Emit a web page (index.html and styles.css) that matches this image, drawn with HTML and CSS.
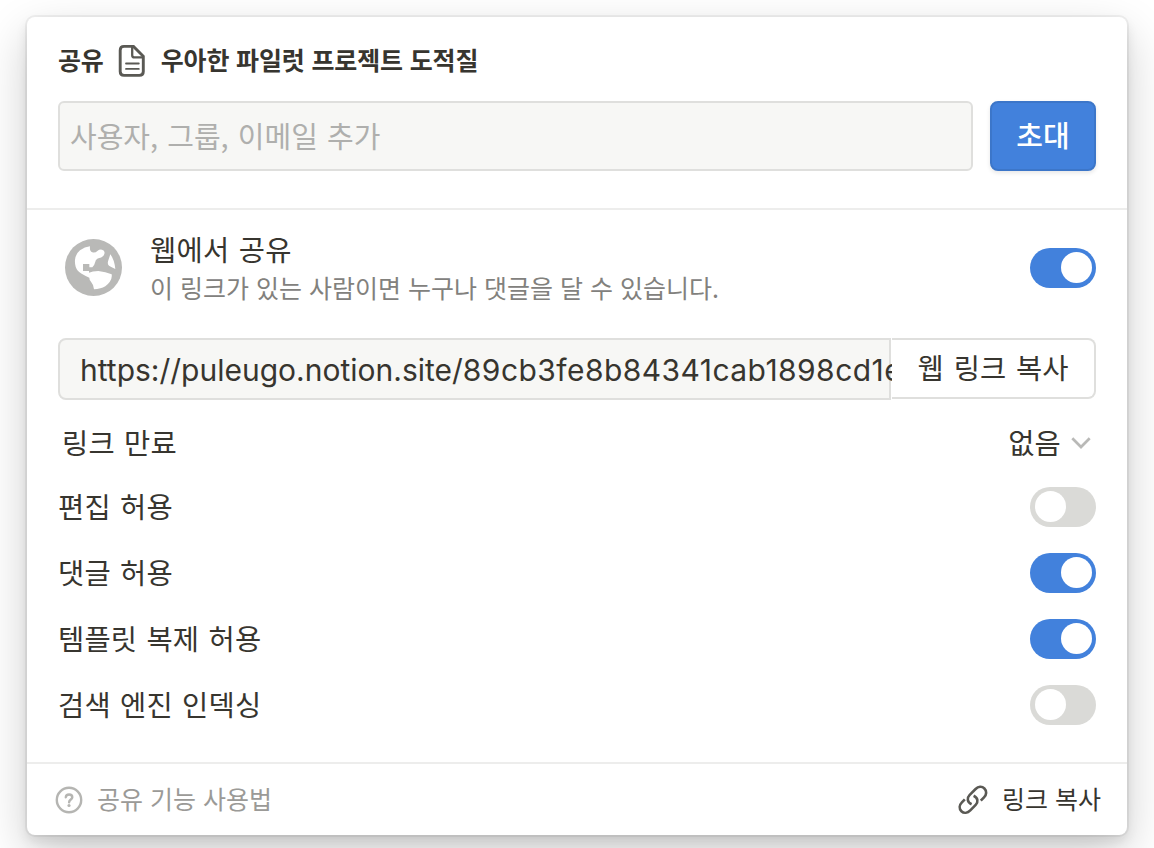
FILE: index.html
```html
<!DOCTYPE html>
<html lang="ko">
<head>
    <meta charset="UTF-8">
    <title>공유</title>
    <link rel="stylesheet" href="styles.css">
</head>
<body>
    <div class="card">
        <header class="header">
            <div class="title">
                <span class="label">공유</span>
                <svg class="doc-icon" viewBox="0 0 28 34" fill="none" stroke="#5a5954">
                    <path d="M6 2.4H15.5L25.3 12.3V27.5Q25.3 31.4 21.4 31.4H6Q2.2 31.4 2.2 27.5V6.3Q2.2 2.4 6 2.4Z" stroke-width="2.9"/>
                    <path d="M14.2 3V11.2Q14.2 13.4 16.4 13.4H25" stroke-width="2.3"/>
                    <path d="M8 19.5H20.8M8 24.9H20.8" stroke-width="1.8" stroke-linecap="round"/>
                </svg>
                <span class="label">우아한 파일럿 프로젝트 도적질</span>
            </div>
            <div class="invite">
                <input class="invite-input" type="text" placeholder="사용자, 그룹, 이메일 추가">
                <button class="invite-button">초대</button>
            </div>
        </header>

        <main class="content">
            <div class="web-share">
                <svg class="globe-icon" viewBox="0 0 171 171">
                    <circle cx="85.5" cy="85.5" r="85.5" fill="#b9b9b7"/>
                    <path d="M75 22Q73 37 82 40Q90 43 98 35Q103 31 111 32Q121 35 118 45Q115 54 103 57Q92 60 91 68Q88 80 82 85H73V75H54V96H72V101Q82 96 100 96Q122 98 140 106Q142 118 134 129Q122 145 106 148Q96 151 87 151Q86 137 78 128Q73 124 73 116Q60 110 50 104Q36 96 32 83Q29 73 30 62Q32 45 45 34Q59 24 75 22ZM136 46Q148 62 151 90Q139 84 132 80Q126 75 130 64Z" fill="#fff"/>
                </svg>
                <div class="web-text">
                    <div class="web-title">웹에서 공유</div>
                    <div class="web-desc">이 링크가 있는 사람이면 누구나 댓글을 달 수 있습니다.</div>
                </div>
                <div class="toggle on"></div>
            </div>

            <div class="link-box">
                <div class="link-url">https://puleugo.notion.site/<span class="hash">89cb3fe8b84341cab1898cd1e</span></div>
                <button class="link-copy">웹 링크 복사</button>
            </div>

            <div class="row expire">
                <span class="label">링크 만료</span>
                <span class="select">
                    <span class="label">없음</span>
                    <svg class="chevron" viewBox="0 0 20 12" fill="none" stroke="#b9b9b7" stroke-width="2.7">
                        <path d="M1.3 1.3L10 10L18.7 1.3"/>
                    </svg>
                </span>
            </div>
            <div class="row">
                <span class="label">편집 허용</span>
                <div class="toggle"></div>
            </div>
            <div class="row">
                <span class="label">댓글 허용</span>
                <div class="toggle on"></div>
            </div>
            <div class="row">
                <span class="label">템플릿 복제 허용</span>
                <div class="toggle on"></div>
            </div>
            <div class="row">
                <span class="label">검색 엔진 인덱싱</span>
                <div class="toggle"></div>
            </div>
        </main>

        <footer class="footer">
            <div class="help">
                <svg class="help-icon" viewBox="0 0 28 28" fill="none" stroke="#b5b5b2">
                    <circle cx="14" cy="14" r="12.2" stroke-width="2.4"/>
                    <path d="M10.8 11.3C10.9 9.4 12.2 8.5 14.1 8.5C16 8.5 17.3 9.6 17.3 11.2C17.3 13.6 14.1 13.4 14.1 16.2" stroke-width="2.4" stroke-linecap="round"/>
                    <circle cx="14" cy="19.5" r="1.6" fill="#b5b5b2" stroke="none"/>
                </svg>
                <span class="label">공유 기능 사용법</span>
            </div>
            <div class="copy">
                <svg class="chain-icon" viewBox="0 0 30 30" fill="none" stroke="#5a5954" stroke-width="2.6">
                    <path d="M13.6 19.2C9.1 17.2 8.8 12.8 11.5 10.1L17.6 4C20.3 1.3 23.9 1 26.4 3.5C28.9 6 28.7 9.6 26 12.3L22.8 15.7"/>
                    <path d="M15.6 10.8C20.1 12.8 20.4 17.2 17.7 19.9L12.3 25.4C9.6 28.1 6 28.7 3.4 26.2C0.9 23.7 1.2 20.1 3.9 17.4L6.8 14.4"/>
                </svg>
                <span class="label">링크 복사</span>
            </div>
        </footer>
    </div>
</body>
</html>
```
FILE: styles.css
```css
* {
    box-sizing: border-box;
}

body {
    margin: 0;
    height: 848px;
    padding: 17px 27px 0;
    overflow: hidden;
    background-color: #ffffff;
    color: #37352f;
    font-family: "Noto Sans CJK KR", sans-serif;
    font-size: 28.5px;
    white-space: nowrap;
}

input, button {
    font-family: inherit;
    color: inherit;
    margin: 0;
}

.card {
    height: 818px;
    border-radius: 8px;
    background-color: #ffffff;
    box-shadow: 0 0 0 2px rgba(15, 15, 15, 0.05), 0 6px 12px rgba(15, 15, 15, 0.1), 0 18px 48px rgba(15, 15, 15, 0.2);
}

.header {
    height: 193px;
    padding: 28px 31px 0;
    border-bottom: 2px solid #ededec;
}

/* the Korean glyphs sit low in their line box */
.label {
    padding-bottom: 4px;
}

.title {
    display: flex;
    align-items: center;
    height: 32px;
    font-size: 25px;
    font-weight: 700;
    letter-spacing: -0.15px;
}

.doc-icon {
    width: 28px;
    height: 34px;
    margin: 0 15px 0 14px;
}

.invite {
    display: flex;
    gap: 17px;
    margin-top: 24px;
}

.invite-input {
    flex: 1;
    height: 70px;
    padding: 0 10px 2px;
    border: 2px solid #dfdfdd;
    border-radius: 6px;
    background-color: #f7f7f5;
    font-size: 29px;
    word-spacing: 1px;
}

.invite-input::placeholder {
    color: #afafad;
}

.invite-button {
    width: 106px;
    height: 70px;
    padding: 0 0 4px;
    border: 2px solid #3c76c9;
    border-radius: 8px;
    background-color: #4281dc;
    box-shadow: 0 2px 4px rgba(15, 15, 15, 0.1);
    color: #ffffff;
    font-size: 29px;
    font-weight: 500;
}

.content {
    height: 552px;
    padding: 0 31px;
    word-spacing: 1px;
}

.web-share {
    display: flex;
    align-items: center;
    height: 116px;
}

.globe-icon {
    width: 57px;
    height: 57px;
    margin: 0 28px 2px 7px;
}

.web-text {
    flex: 1;
}

.web-title {
    height: 38px;
    line-height: 38px;
    letter-spacing: 0.3px;
}

.web-desc {
    height: 38px;
    line-height: 38px;
    color: #82817d;
    font-size: 25px;
    word-spacing: 0;
}

.toggle {
    width: 66px;
    height: 40px;
    padding: 4px;
    border-radius: 20px;
    background-color: #dadad7;
}

.toggle::before {
    content: "";
    display: block;
    width: 31px;
    height: 31px;
    margin-left: 1px;
    border-radius: 50%;
    background-color: #ffffff;
}

.toggle.on {
    background-color: #4281dc;
}

.toggle.on::before {
    margin-left: auto;
}

.link-box {
    display: flex;
    align-items: flex-start;
    margin-top: 12px;
}

.link-url {
    width: 833px;
    height: 62px;
    padding-left: 20px;
    border: 2px solid #dfdfdd;
    border-radius: 8px 0 0 8px;
    background-color: #f7f7f5;
    font-family: Inter, sans-serif;
    font-size: 30px;
    line-height: 60px;
}

.hash {
    letter-spacing: 0.45px;
}

.link-copy {
    position: relative;
    width: 204px;
    height: 61px;
    margin-left: 1px;
    padding: 0 0 4px;
    border: 2px solid #dfdfdd;
    border-left: none;
    border-radius: 0 8px 8px 0;
    background-color: #ffffff;
    font-size: 28.5px;
    word-spacing: 2px;
}

.row {
    display: flex;
    align-items: center;
    justify-content: space-between;
    height: 66px;
    letter-spacing: 0.2px;
}

.expire {
    height: 62px;
    margin-top: 12px;
    padding: 0 5px 0 4px;
}

.select {
    display: flex;
    align-items: center;
    gap: 10px;
}

.chevron {
    width: 20px;
    height: 12px;
}

.footer {
    display: flex;
    align-items: center;
    justify-content: space-between;
    height: 73px;
    padding: 1px 26px 0 28px;
    border-top: 2px solid #ededec;
    font-size: 25px;
}

.help, .copy {
    display: flex;
    align-items: center;
    gap: 14px;
}

.help {
    color: #9b9a97;
}

.help-icon {
    width: 28px;
    height: 28px;
}

.chain-icon {
    width: 30px;
    height: 30px;
}
```
